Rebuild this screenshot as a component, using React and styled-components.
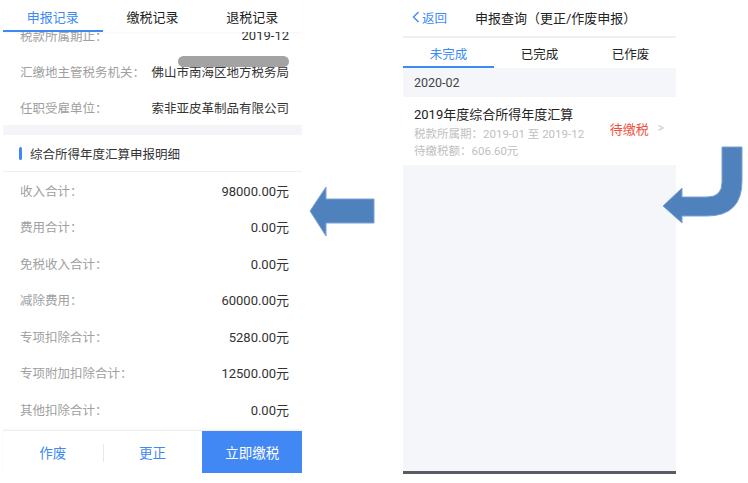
import styled, { createGlobalStyle } from 'styled-components';

const GlobalStyle = createGlobalStyle`
  html, body {
    margin: 0;
    padding: 0;
    background: #fff;
  }
  body {
    font-family: Roboto, "Noto Sans CJK SC", sans-serif;
  }
  * {
    box-sizing: border-box;
  }
`;

const BLUE = '#3d8af7';

const Page = styled.div`
  display: flex;
  align-items: flex-start;
  width: 748px;
  height: 483px;
  padding-left: 3px;
  overflow: hidden;
`;

/* ---------- left phone screen ---------- */

const LeftScreen = styled.div`
  width: 299px;
  height: 473px;
  display: flex;
  flex-direction: column;
  background: #fff;
`;

const TabBar = styled.div`
  display: flex;
  height: 32px;
  flex-shrink: 0;
  background: #fff;
  box-shadow: 0 1px 2px rgba(0, 0, 0, 0.04);
  position: relative;
  z-index: 1;
`;

const Tab = styled.div`
  flex: 1;
  display: flex;
  align-items: center;
  justify-content: center;
  font-size: ${({ $size }) => $size || '13px'};
  color: ${({ $active }) => ($active ? BLUE : '#222')};
  border-bottom: 2px solid ${({ $active }) => ($active ? BLUE : 'transparent')};
  padding-top: 2px;
`;

const Scroll = styled.div`
  flex: 1;
  overflow: hidden;
`;

/* the list is scrolled a little, so its first row sits under the tabs */
const ScrollInner = styled.div`
  margin-top: -15px;
`;

const Row = styled.div`
  display: flex;
  align-items: center;
  justify-content: space-between;
  height: ${({ $h }) => $h || '36px'};
  padding: 0 13px 0 17px;
  font-size: 12.5px;
`;

const Label = styled.span`
  color: #a0a0a0;
`;

const Value = styled.span`
  color: #333;
  position: relative;
  font-size: ${({ $num }) => ($num ? '13px' : '12.5px')};
`;

const Redact = styled.span`
  position: absolute;
  left: 27px;
  right: 0;
  top: -6px;
  height: 11px;
  border-radius: 6px;
  background: #a3a3a3;
`;

const Band = styled.div`
  height: 10px;
  background: #f4f5f8;
`;

const SectionHead = styled.div`
  display: flex;
  align-items: center;
  gap: 8px;
  height: 37px;
  padding-left: 16px;
  border-bottom: 1px solid #eeeff2;
  font-size: 12.5px;
  color: #333;

  &::before {
    content: '';
    width: 3px;
    height: 13px;
    border-radius: 2px;
    background: ${BLUE};
  }
`;

const Footer = styled.div`
  display: flex;
  height: 43px;
  flex-shrink: 0;
  border-top: 1px solid #eeeeee;
  box-shadow: 0 -1px 3px rgba(0, 0, 0, 0.04);
`;

const FooterButton = styled.div`
  flex: 1;
  display: flex;
  align-items: center;
  justify-content: center;
  font-size: 13.5px;
  color: ${({ $primary }) => ($primary ? '#fff' : BLUE)};
  background: ${({ $primary }) => ($primary ? '#4288f4' : '#fff')};
  position: relative;

  & + &::before {
    content: '';
    position: absolute;
    left: 0;
    top: 13px;
    height: 18px;
    width: 1px;
    background: ${({ $primary }) => ($primary ? 'transparent' : '#e8e8e8')};
  }
`;

/* ---------- arrows ---------- */

const LeftGutter = styled.div`
  width: 101px;
  padding: 184px 0 0 6px;
  flex-shrink: 0;
`;

const RightGutter = styled.div`
  margin-left: -16px;
  padding-top: 145px;
  flex-shrink: 0;
  position: relative;
  z-index: 2;
`;

/* ---------- right phone screen ---------- */

const RightScreen = styled.div`
  width: 273px;
  height: 474px;
  display: flex;
  flex-direction: column;
  background: #f5f6fa;
  border-bottom: 3px solid #585b61;
  flex-shrink: 0;
`;

const NavBar = styled.div`
  display: flex;
  align-items: center;
  height: 38px;
  padding: 0 0 2px 9px;
  background: #fff;
  border-bottom: 2px solid #eeeff1;
`;

const Back = styled.div`
  display: flex;
  align-items: center;
  gap: 2px;
  color: ${BLUE};
  font-size: 12.5px;
  width: 63px;
`;

const Title = styled.div`
  font-size: 13px;
  color: #222;
`;

const RightTabs = styled.div`
  display: flex;
  height: 30px;
  background: #fff;
`;

const GroupDate = styled.div`
  height: 29px;
  display: flex;
  align-items: center;
  padding-left: 11px;
  font-size: 12.5px;
  color: #444;
`;

const Card = styled.div`
  display: flex;
  align-items: center;
  justify-content: space-between;
  height: 68px;
  padding: 0 12px 0 11px;
  background: #fff;
`;

const CardText = styled.div`
  display: flex;
  flex-direction: column;
  gap: 2px;
`;

const CardTitle = styled.div`
  font-size: 13px;
  color: #222;
  margin-bottom: 2px;
`;

const CardMeta = styled.div`
  font-size: 11.5px;
  color: #c0c0c0;
  line-height: 15px;
`;

const Status = styled.div`
  display: flex;
  align-items: center;
  gap: 9px;
  color: #f0523d;
  font-size: 13px;
  margin-top: -6px;
`;

const Chevron = styled.span`
  color: #c8c8c8;
  font-size: 12px;
`;

const topRows = [
  { label: '税款所属期止：', value: '2019-12', num: true },
  { label: '汇缴地主管税务机关：', value: '佛山市南海区地方税务局', redact: true },
  { label: '任职受雇单位：', value: '索非亚皮革制品有限公司' },
];

const detailRows = [
  ['收入合计：', '98000.00元'],
  ['费用合计：', '0.00元'],
  ['免税收入合计：', '0.00元'],
  ['减除费用：', '60000.00元'],
  ['专项扣除合计：', '5280.00元'],
  ['专项附加扣除合计：', '12500.00元'],
  ['其他扣除合计：', '0.00元'],
];

const ARROW_FILL = '#4f81bd';
const ARROW_EDGE = '#7ca2d2';

function StraightArrow() {
  return (
    <svg width="70" height="56" viewBox="0 0 70 56">
      <polygon points="2,27 18,3 18,15 66,15 66,39 18,39 18,52" fill={ARROW_FILL} stroke={ARROW_EDGE} strokeWidth="1" />
    </svg>
  );
}

function HookArrow() {
  return (
    <svg width="86" height="82" viewBox="0 0 86 82">
      <path
        d="M62,2 H82 V36 Q82,71 47,71 H22 V78 L3,61 L22,43 V52 H47 Q62,52 62,37 Z"
        fill={ARROW_FILL}
        stroke={ARROW_EDGE}
        strokeWidth="1"
      />
    </svg>
  );
}

export default function App() {
  return (
    <>
      <GlobalStyle />
      <Page>
        <LeftScreen>
          <TabBar>
            <Tab $active>申报记录</Tab>
            <Tab>缴税记录</Tab>
            <Tab>退税记录</Tab>
          </TabBar>
          <Scroll>
            <ScrollInner>
              {topRows.map((row) => (
                <Row key={row.label}>
                  <Label>{row.label}</Label>
                  <Value $num={row.num}>
                    {row.redact && <Redact />}
                    {row.value}
                  </Value>
                </Row>
              ))}
              <Band />
              <SectionHead>综合所得年度汇算申报明细</SectionHead>
              {detailRows.map(([label, value]) => (
                <Row key={label} $h="36.5px">
                  <Label>{label}</Label>
                  <Value $num>{value}</Value>
                </Row>
              ))}
            </ScrollInner>
          </Scroll>
          <Footer>
            <FooterButton>作废</FooterButton>
            <FooterButton>更正</FooterButton>
            <FooterButton $primary>立即缴税</FooterButton>
          </Footer>
        </LeftScreen>

        <LeftGutter>
          <StraightArrow />
        </LeftGutter>

        <RightScreen>
          <NavBar>
            <Back>
              <svg width="8" height="12" viewBox="0 0 8 12">
                <path d="M6.5,1 L1.5,6 L6.5,11" fill="none" stroke={BLUE} strokeWidth="1.4" />
              </svg>
              返回
            </Back>
            <Title>申报查询（更正/作废申报）</Title>
          </NavBar>
          <RightTabs>
            <Tab $active $size="12.5px">未完成</Tab>
            <Tab $size="12.5px">已完成</Tab>
            <Tab $size="12.5px">已作废</Tab>
          </RightTabs>
          <GroupDate>2020-02</GroupDate>
          <Card>
            <CardText>
              <CardTitle>2019年度综合所得年度汇算</CardTitle>
              <CardMeta>税款所属期：2019-01 至 2019-12</CardMeta>
              <CardMeta>待缴税额：606.60元</CardMeta>
            </CardText>
            <Status>
              待缴税
              <Chevron>&gt;</Chevron>
            </Status>
          </Card>
        </RightScreen>

        <RightGutter>
          <HookArrow />
        </RightGutter>
      </Page>
    </>
  );
}
